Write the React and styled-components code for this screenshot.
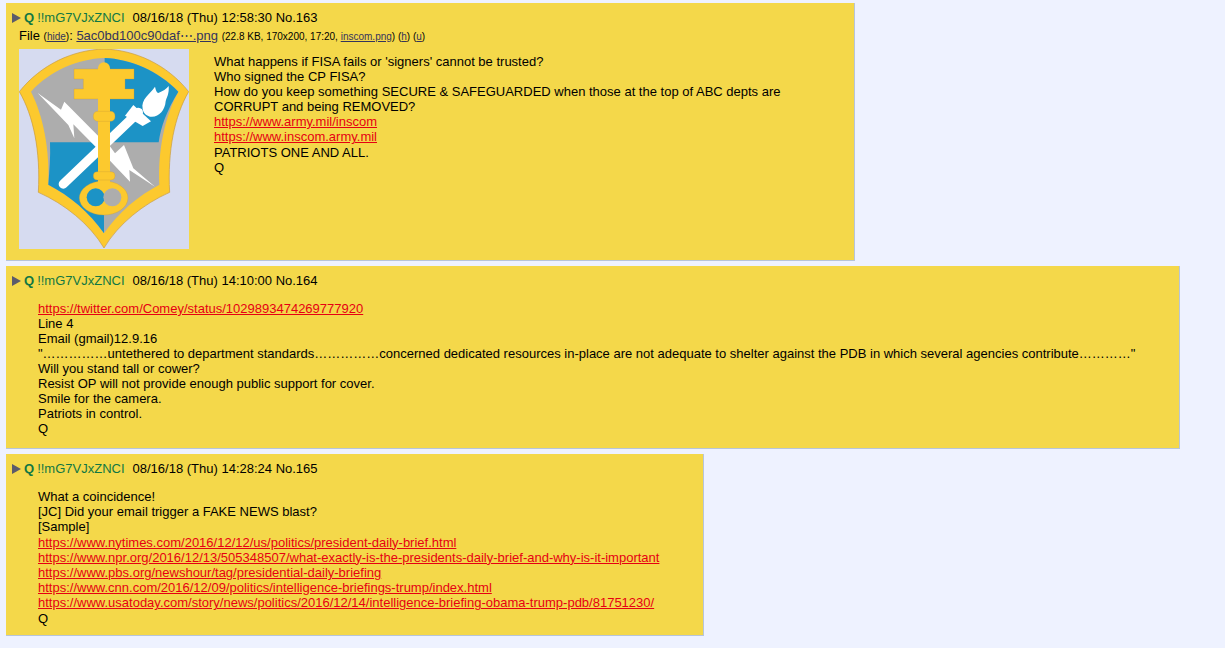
import React from "react";
import styled, { createGlobalStyle } from "styled-components";

const GlobalStyle = createGlobalStyle`
  html, body {
    margin: 0;
    padding: 0;
    background: #eef2ff;
    color: #000;
    font-family: Arial, "Liberation Sans", Helvetica, sans-serif;
    font-size: 13px;
  }
`;

const Thread = styled.div`
  display: flex;
  flex-direction: column;
  align-items: flex-start;
  gap: 5px;
  padding: 3px 0 0 6px;
`;

const Post = styled.div`
  box-sizing: border-box;
  width: ${(p) => p.$width}px;
  height: ${(p) => p.$height}px;
  background: #f4d84a;
  border-right: 1px solid #b7c5d9;
  border-bottom: 1px solid #b7c5d9;
  padding: 7px 0 0 6px;
`;

const Info = styled.div`
  display: flex;
  align-items: center;
  height: 15px;
  line-height: 15px;
  white-space: pre;
`;

const Arrow = styled.span`
  width: 0;
  height: 0;
  margin: 0 3px 0 0;
  border-left: 9px solid #5b5b6b;
  border-top: 5px solid transparent;
  border-bottom: 5px solid transparent;
`;

const Name = styled.span`
  color: #117743;
  font-weight: 700;
`;

const Trip = styled.span`
  color: #117743;
  margin: 0 8px 0 3px;
`;

const FileLine = styled.div`
  height: 24px;
  padding: 2px 0 0 7px;
  box-sizing: border-box;
  line-height: 17px;
  white-space: pre;
`;

const Meta = styled.span`
  font-size: 10px;
`;

const DarkLink = styled.a`
  color: #34345c;
  text-decoration: underline;
`;

const Media = styled.div`
  display: flex;
  padding: 0 0 0 7px;
`;

const Thumb = styled.svg`
  display: block;
  width: 170px;
  height: 200px;
  flex: none;
`;

const Message = styled.div`
  margin: ${(p) => p.$margin};
  line-height: ${(p) => p.$leading}px;
  white-space: nowrap;
`;

const Line = styled.div`
  min-height: 15px;
`;

const QuoteLink = styled.a`
  color: #e60012;
  text-decoration: underline;
`;

const Shield = () => (
  <Thumb viewBox="27 15 510 600">
    <rect x="27" y="15" width="510" height="600" fill="#d6dbf0" />
    <path
      d="M282 15 C374 18 470 60 536 143 C494 215 472 320 479 445 C400 480 325 540 282 612 C239 540 164 480 85 445 C92 320 70 215 28 143 C94 60 190 18 282 15 Z"
      fill="#fcc92e"
      stroke="#c99a3a"
      strokeWidth="2"
    />
    <path
      d="M282 42 C360 45 445 80 505 143 C465 215 443 320 448 422 C385 455 325 505 282 568 C239 505 179 455 115 422 C120 320 100 215 63 143 C120 80 204 45 282 42 Z"
      fill="#adadad"
    />
    <path d="M284 42 C360 45 445 80 505 143 C470 200 452 250 446 295 L284 295 Z" fill="#1c93c6" />
    <path d="M282 295 L120 295 C122 340 118 380 115 422 C179 455 239 505 282 568 Z" fill="#1c93c6" />
    {/* lightning bolt, split in two by the key */}
    <path
      d="M83 147 L153 197 L163 173 L270 281 L270 322 L190 241 L193 283 L175 243 Z"
      fill="#fff"
    />
    <path
      d="M295 300 L315 328 L342 303 L370 373 L435 428 L358 378 L360 413 L295 345 Z"
      fill="#fff"
    />
    {/* torch */}
    <path d="M160 420 L385 205" stroke="#fff" strokeWidth="28" strokeLinecap="round" fill="none" />
    <path d="M370 183 L423 232 L398 246 L345 215 Z" fill="#fff" />
    <path
      d="M398 195 C392 165 420 150 435 128 C438 140 440 146 445 147 C458 142 470 135 476 126 C478 150 470 160 467 172 C465 200 445 222 420 218 C405 214 400 205 398 195 Z"
      fill="#fff"
    />
    {/* key */}
    <g fill="#fcc92e" stroke="#c99a3a" strokeWidth="1">
      <path d="M192 75 L372 75 L372 105 L345 105 L345 135 L372 135 L372 165 L192 165 L192 135 L220 135 L220 105 L192 105 Z" />
      <ellipse cx="281" cy="462" rx="73" ry="51" />
      <rect x="264" y="55" width="36" height="375" rx="18" stroke="none" />
      <rect x="250" y="202" width="65" height="30" rx="13" />
      <rect x="250" y="383" width="65" height="25" rx="12" />
    </g>
    <circle cx="257" cy="460" r="27" fill="#1c93c6" />
    <circle cx="307" cy="460" r="27" fill="#adadad" />
  </Thumb>
);

const PostInfo = ({ time, no }) => (
  <Info>
    <Arrow />
    <Name>Q</Name>
    <Trip>!!mG7VJxZNCI</Trip>
    {`08/16/18 (Thu) ${time} No.${no}`}
  </Info>
);

const Body = ({ lines, margin, leading }) => (
  <Message $margin={margin} $leading={leading}>
    {lines.map((l) => (
      <Line key={l}>
        {l.startsWith("https://") ? <QuoteLink href="#">{l}</QuoteLink> : l}
      </Line>
    ))}
  </Message>
);

const firstLines = [
  "What happens if FISA fails or 'signers' cannot be trusted?",
  "Who signed the CP FISA?",
  "How do you keep something SECURE & SAFEGUARDED when those at the top of ABC depts are",
  "CORRUPT and being REMOVED?",
  "https://www.army.mil/inscom",
  "https://www.inscom.army.mil",
  "PATRIOTS ONE AND ALL.",
  "Q",
];

const secondLines = [
  "https://twitter.com/Comey/status/1029893474269777920",
  "Line 4",
  "Email (gmail)12.9.16",
  "\"……………untethered to department standards……………concerned dedicated resources in-place are not adequate to shelter against the PDB in which several agencies contribute…………\"",
  "Will you stand tall or cower?",
  "Resist OP will not provide enough public support for cover.",
  "Smile for the camera.",
  "Patriots in control.",
  "Q",
];

const thirdLines = [
  "What a coincidence!",
  "[JC] Did your email trigger a FAKE NEWS blast?",
  "[Sample]",
  "https://www.nytimes.com/2016/12/12/us/politics/president-daily-brief.html",
  "https://www.npr.org/2016/12/13/505348507/what-exactly-is-the-presidents-daily-brief-and-why-is-it-important",
  "https://www.pbs.org/newshour/tag/presidential-daily-briefing",
  "https://www.cnn.com/2016/12/09/politics/intelligence-briefings-trump/index.html",
  "https://www.usatoday.com/story/news/politics/2016/12/14/intelligence-briefing-obama-trump-pdb/81751230/",
  "Q",
];

const App = () => (
  <>
    <GlobalStyle />
    <Thread>
      <Post $width={849} $height={258}>
        <PostInfo time="12:58:30" no="163" />
        <FileLine>
          File <Meta>(<DarkLink href="#">hide</DarkLink>)</Meta>: <DarkLink href="#">5ac0bd100c90daf⋯.png</DarkLink>{" "}
          <Meta>
            (22.8 KB, 170x200, 17:20, <DarkLink href="#">inscom.png</DarkLink>) (<DarkLink href="#">h</DarkLink>) (<DarkLink href="#">u</DarkLink>)
          </Meta>
        </FileLine>
        <Media>
          <Shield />
          <Body lines={firstLines} margin="4.7px 0 0 25px" leading={15.15} />
        </Media>
      </Post>
      <Post $width={1174} $height={183}>
        <PostInfo time="14:10:00" no="164" />
        <Body lines={secondLines} margin="13px 0 0 26px" leading={15} />
      </Post>
      <Post $width={698} $height={182}>
        <PostInfo time="14:28:24" no="165" />
        <Body lines={thirdLines} margin="13px 0 0 26px" leading={15.2} />
      </Post>
    </Thread>
  </>
);

export default App;
